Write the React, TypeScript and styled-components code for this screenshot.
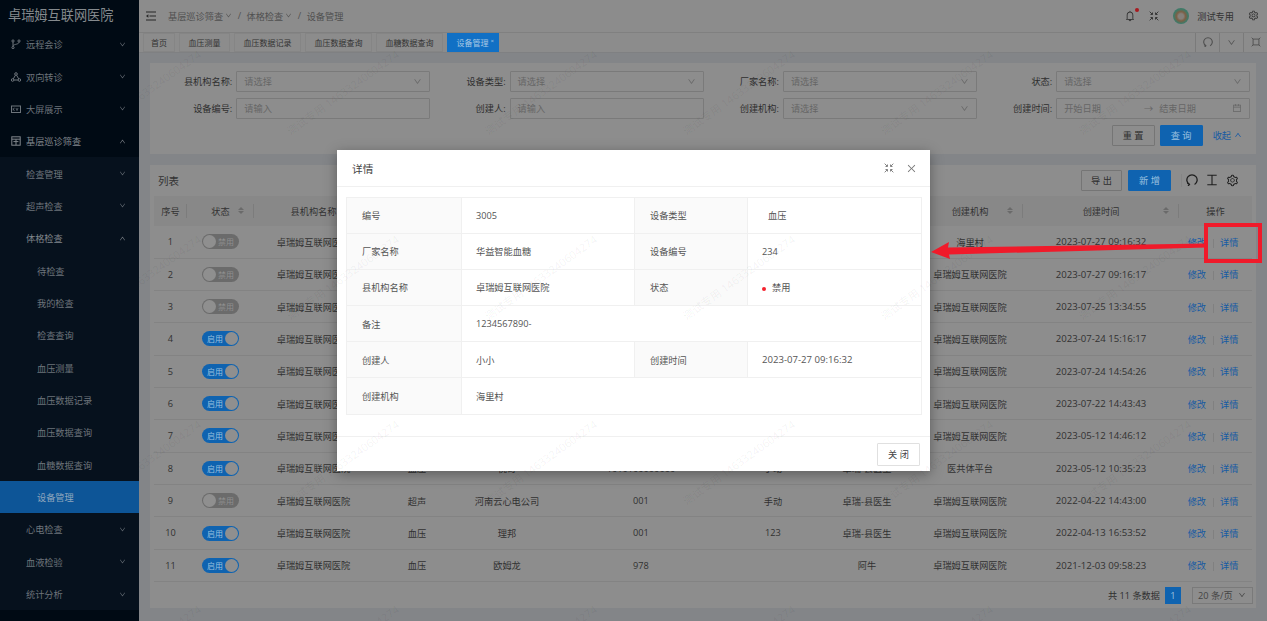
import React from 'react';
import styled, { createGlobalStyle } from 'styled-components';
import {
  AiOutlineBell,
  AiOutlineCalendar,
  AiOutlineClose,
  AiOutlineDown,
  AiOutlineSetting,
  AiOutlineUp,
} from 'react-icons/ai';

const FONT = '"Open Sans", "Noto Sans CJK SC", sans-serif';

const GlobalStyle = createGlobalStyle`
  html, body { margin: 0; padding: 0; height: 100%; overflow: hidden; }
  body { font-family: ${FONT}; font-size: 9.2px; color: #333; background: #838588; }
  * { box-sizing: border-box; }
`;

const Page = styled.div`
  position: relative;
  display: flex;
  width: 1267px;
  height: 621px;
  overflow: hidden;
`;

/* sidebar */
const Sidebar = styled.aside`
  flex: 0 0 139px;
  background: #000a14;
  color: #6d747b;
`;

const Logo = styled.div`
  height: 28px;
  padding: 0 8px;
  font-size: 13.2px;
  line-height: 30px;
  color: #858a8e;
  white-space: nowrap;
`;

const MenuRow = styled.div<{ $level?: number; $active?: boolean; $open?: boolean }>`
  display: flex;
  align-items: center;
  height: 32.35px;
  padding-left: ${(p) => (p.$level === 2 ? 37 : p.$level === 1 ? 26 : 11)}px;
  padding-right: 13px;
  background: ${(p) => (p.$active ? '#0d5597' : 'transparent')};
  color: ${(p) => (p.$open ? '#80868c' : p.$active ? '#8fa6bd' : '#6d747b')};
`;

const MenuIcon = styled.svg`
  flex: none;
  width: 10px;
  height: 10px;
  margin-right: 5px;
  fill: none;
  stroke: currentColor;
  stroke-width: 1;
`;

const MenuLabel = styled.span`
  flex: 1;
`;

const SubMenu = styled.div`
  background: #06111d;
`;

/* main column */
const Main = styled.main`
  flex: 1;
  min-width: 0;
  display: flex;
  flex-direction: column;
`;

const TopBar = styled.header`
  display: flex;
  align-items: center;
  height: 32px;
  padding: 0 8px 0 7px;
  background: #8c8c8c;
  color: #555;
`;

const FoldIcon = styled.svg`
  flex: none;
  width: 10px;
  height: 10px;
  color: #262626;
`;

const Crumbs = styled.div`
  flex: 1;
  display: flex;
  align-items: center;
  gap: 5.5px;
  margin-left: 12px;
  color: #505050;
`;

const Crumb = styled.span`
  display: flex;
  align-items: center;
  gap: 2px;
`;

const CrumbChevron = styled(AiOutlineDown)`
  font-size: 7px;
`;

const UserTools = styled.div`
  display: flex;
  align-items: center;
  color: #2f2f2f;
`;

const BellWrap = styled.span`
  position: relative;
  display: flex;
  font-size: 12px;
  margin-right: 13px;
`;

const RedDot = styled.i`
  position: absolute;
  top: -2px;
  right: -3px;
  width: 4px;
  height: 4px;
  border-radius: 50%;
  background: #a81a20;
`;

const Avatar = styled.span`
  width: 16px;
  height: 16px;
  margin: 0 8px 0 14px;
  border-radius: 50%;
  background: radial-gradient(circle at 50% 52%, #85807a 0 22%, #7d5f45 40%, #3f7a68 62%);
`;

const UserName = styled.span`
  margin-right: 14px;
  color: #333;
`;

const TabBar = styled.nav`
  display: flex;
  align-items: center;
  gap: 4px;
  height: 21px;
  padding-left: 4px;
  background: #8c8c8c;
  border-top: 1px solid #808080;
  border-bottom: 1px solid #7f8082;
`;

const Tab = styled.span<{ $active?: boolean }>`
  display: flex;
  align-items: center;
  justify-content: center;
  height: 19px;
  padding: 0 8.5px;
  border: 1px solid ${(p) => (p.$active ? '#1170c5' : '#858585')};
  background: ${(p) => (p.$active ? '#1170c5' : '#8c8c8c')};
  color: ${(p) => (p.$active ? '#a9c8e4' : '#333')};
  font-size: 8px;
  &:first-child { padding: 0 7px; }
`;

const TabClose = styled.span`
  font-size: 6px;
  margin: -3px -4px 0 2px;
`;

const TabTools = styled.div`
  display: flex;
  margin-left: auto;
  height: 100%;
`;

const TabTool = styled.span`
  display: flex;
  align-items: center;
  justify-content: center;
  width: 24px;
  border-left: 1px solid #7a7a7a;
  color: #505050;
  font-size: 10px;
`;

const Content = styled.div`
  flex: 1;
  display: flex;
  flex-direction: column;
  gap: 11px;
  padding: 10px 11px 13px;
  background: #838588;
`;

const FilterCard = styled.section`
  height: 91px;
  padding: 8px 6px 0 7px;
  background: #8d8d8d;
`;

const FilterGrid = styled.div`
  display: grid;
  grid-template-columns: repeat(4, 273.3px);
  row-gap: 6px;
`;

const Field = styled.label`
  display: flex;
  align-items: center;
  justify-content: flex-end;
  gap: 4px;
  color: #2f2f2f;
`;

const Input = styled.span`
  display: flex;
  align-items: center;
  justify-content: space-between;
  width: 194px;
  height: 21px;
  padding: 0 7px;
  border: 1px solid #7a7a7a;
  border-radius: 1px;
  color: #666;
`;

const DateInput = styled(Input)`
  justify-content: flex-start;
`;

const DateArrow = styled.span`
  margin: 0 6px 0 43px;
`;

const DateIcon = styled(AiOutlineCalendar)`
  margin-left: auto;
`;

const FilterActions = styled.div`
  display: flex;
  align-items: center;
  justify-content: flex-end;
  gap: 5px;
  margin-top: 6px;
  padding-right: 1px;
`;

const Button = styled.span<{ $primary?: boolean; $w?: number }>`
  display: flex;
  align-items: center;
  justify-content: center;
  width: ${(p) => p.$w ?? 43}px;
  height: 21px;
  border: 1px solid ${(p) => (p.$primary ? '#0f63b0' : '#757575')};
  border-radius: 1px;
  background: ${(p) => (p.$primary ? '#0f63b0' : 'transparent')};
  color: ${(p) => (p.$primary ? '#9cc0df' : '#2f2f2f')};
  white-space: pre;
`;

const Collapse = styled.span`
  display: flex;
  align-items: center;
  gap: 3px;
  margin: 0 7px 0 5px;
  color: #175aa3;
`;

const TableCard = styled.section`
  flex: 1;
  display: flex;
  flex-direction: column;
  background: #8d8d8d;
  padding: 0 4px;
`;

const TableHead = styled.div`
  display: flex;
  align-items: center;
  height: 31px;
  padding: 0 13px 0 4px;
  font-size: 10.5px;
  color: #333;
`;

const TableTitle = styled.span`
  flex: 1;
`;

const TableTools = styled.div`
  display: flex;
  align-items: center;
  gap: 6px;
  font-size: 9.2px;
`;

const IconGroup = styled.div`
  display: flex;
  align-items: center;
  gap: 8px;
  margin-left: 4px;
  padding-left: 4px;
  border-left: 1px solid #858585;
  color: #1f1f1f;
`;

const ToolIcon = styled.svg`
  display: block;
  width: 12px;
  height: 12px;
  fill: none;
  stroke: currentColor;
`;

const DataTable = styled.table`
  width: 1098px;
  table-layout: fixed;
  border-collapse: collapse;
`;

const Th = styled.th`
  position: relative;
  height: 30px;
  padding: 0;
  background: #888888;
  font-weight: 400;
  color: #333;
  text-align: center;
  &:not(:last-child)::after {
    content: '';
    position: absolute;
    right: 0;
    top: 8px;
    bottom: 8px;
    width: 1px;
    background: #7c7c7c;
  }
`;

const SortMark = styled.span`
  position: absolute;
  right: 10px;
  top: 11px;
  display: flex;
  flex-direction: column;
  gap: 1px;
  &::before, &::after {
    content: '';
    width: 0;
    height: 0;
    border-left: 3px solid transparent;
    border-right: 3px solid transparent;
  }
  &::before { border-bottom: 3px solid #6a6a6a; }
  &::after { border-top: 3px solid #6a6a6a; }
`;

const Td = styled.td<{ $time?: boolean; $actions?: boolean }>`
  height: 32.35px;
  padding: 0 ${(p) => (p.$actions ? 5 : 0)}px 0 0;
  text-align: center;
  white-space: nowrap;
  overflow: hidden;
  border-bottom: 1px solid #838383;
  color: #313131;
  font-size: ${(p) => (p.$time ? 9.6 : 9.2)}px;
`;

const Switch = styled.span<{ $on: boolean }>`
  display: inline-flex;
  align-items: center;
  flex-direction: ${(p) => (p.$on ? 'row' : 'row-reverse')};
  justify-content: space-between;
  width: 37px;
  height: 15px;
  padding: 0 ${(p) => (p.$on ? 1 : 5)}px 0 ${(p) => (p.$on ? 5 : 1)}px;
  border-radius: 8px;
  background: ${(p) => (p.$on ? '#0f63b0' : '#6b6b6b')};
  color: ${(p) => (p.$on ? '#9cc0df' : '#8f8f8f')};
  font-size: 8px;
  vertical-align: middle;
`;

const Knob = styled.i`
  width: 13px;
  height: 13px;
  border-radius: 50%;
  background: #8f8f8f;
`;

const LinkText = styled.span`
  color: #175aa3;
`;

const LinkDivider = styled.i`
  display: inline-block;
  width: 1px;
  height: 9px;
  margin: 0 6.5px;
  background: #808080;
  vertical-align: middle;
`;

const Pager = styled.div`
  display: flex;
  align-items: center;
  justify-content: flex-end;
  gap: 5px;
  height: 26px;
  margin-right: -1px;
  color: #2f2f2f;
`;

const PageNo = styled.span`
  display: flex;
  align-items: center;
  justify-content: center;
  width: 16px;
  height: 17px;
  background: #0f63b0;
  color: #9cc0df;
`;

const PageSize = styled.span`
  display: flex;
  align-items: center;
  justify-content: space-between;
  width: 61px;
  height: 17px;
  margin-left: 6px;
  padding: 0 6px 0 5px;
  border: 1px solid #7a7a7a;
  color: #444;
`;

/* dialog */
const Dialog = styled.div`
  position: absolute;
  left: 337px;
  top: 150px;
  display: flex;
  flex-direction: column;
  width: 593px;
  height: 321px;
  background: #fff;
  box-shadow: 0 3px 12px rgba(0, 0, 0, 0.35);
  color: #595959;
`;

const DialogHead = styled.div`
  display: flex;
  align-items: center;
  gap: 12px;
  height: 37px;
  padding: 0 13px 0 15px;
  border-bottom: 1px solid #f0f0f0;
  font-size: 10.7px;
  color: #444;
`;

const DialogTitle = styled.span`
  flex: 1;
`;

const DialogTool = styled.span`
  display: flex;
  color: #777;
`;

const DialogBody = styled.div`
  flex: 1;
  padding: 9.5px 9px 0;
`;

const DescTable = styled.table`
  width: 575px;
  table-layout: fixed;
  border-collapse: collapse;
`;

const DescLabel = styled.td`
  height: 36.2px;
  padding: 0 0 0 15px;
  border: 1px solid #f0f0f0;
  background: #fafafa;
  color: #555;
`;

const DescValue = styled.td<{ $indent?: number; $time?: boolean }>`
  padding: 0 0 0 ${(p) => p.$indent ?? 14}px;
  border: 1px solid #f0f0f0;
  color: #555;
  font-size: ${(p) => (p.$time ? 9.6 : 9.2)}px;
`;

const StatusDot = styled.i`
  display: inline-block;
  width: 4px;
  height: 4px;
  margin-right: 6px;
  border-radius: 50%;
  background: #f5222d;
  vertical-align: middle;
`;

const DialogFoot = styled.div`
  display: flex;
  align-items: center;
  justify-content: flex-end;
  height: 35px;
  padding-right: 10px;
  border-top: 1px solid #f0f0f0;
`;

const CloseButton = styled.span`
  display: flex;
  align-items: center;
  justify-content: center;
  width: 43px;
  height: 23px;
  border: 1px solid #e0e0e0;
  border-radius: 1px;
  color: #444;
  white-space: pre;
`;

/* overlays */
const WatermarkLayer = styled.div`
  position: absolute;
  inset: 0 0 0 139px;
  overflow: hidden;
  pointer-events: none;
`;

const WatermarkGrid = styled.div`
  display: grid;
  grid-template-columns: repeat(7, 198px);
  grid-auto-rows: 185px;
  margin: -1px 0 0 -94px;
`;

const Watermark = styled.span`
  align-self: center;
  justify-self: center;
  font-size: 11px;
  color: rgba(0, 0, 0, 0.06);
  white-space: nowrap;
  transform: rotate(-36deg);
`;

const Annotation = styled.svg`
  position: absolute;
  left: 0;
  top: 0;
  pointer-events: none;
`;

const ShrinkIcon = ({ size = 10 }: { size?: number }) => (
  <svg width={size} height={size} viewBox="0 0 12 12" fill="none" stroke="currentColor" strokeWidth="1.1">
    <path d="M.8.8l3 3M4.2 1.8v2.4H1.8M11.2.8l-3 3M7.8 1.8v2.4h2.4M.8 11.2l3-3M4.2 10.2V7.8H1.8M11.2 11.2l-3-3M7.8 10.2V7.8h2.4" />
  </svg>
);

const FrameIcon = ({ size = 10 }: { size?: number }) => (
  <svg width={size} height={size} viewBox="0 0 12 12" fill="none" stroke="currentColor" strokeWidth="1.1">
    <rect x="2.5" y="2.5" width="7" height="7" />
    <path d="M2.5 2.5L.8.8M9.5 2.5L11.2.8M2.5 9.5L.8 11.2M9.5 9.5l1.7 1.7" />
  </svg>
);

const ReloadIcon = ({ size = 10 }: { size?: number }) => (
  <svg width={size} height={size} viewBox="0 0 14 14" fill="none" stroke="currentColor" strokeWidth="1.6">
    <path d="M4 12.2A6 6 0 1 1 10 12.2" />
    <path d="M1.6 10.4L4 12.2 2.4 14" />
  </svg>
);

const SIDE_GROUPS: [string, React.ReactNode][] = [
  [
    '远程会诊',
    <>
      <circle cx="2" cy="2" r="1.1" />
      <circle cx="2" cy="8.6" r="1.1" />
      <circle cx="8" cy="2" r="1.1" />
      <path d="M2 3.1v4.4M8 3.1c0 2.4-4.5 1.8-6 3.6" />
    </>,
  ],
  [
    '双向转诊',
    <>
      <circle cx="5" cy="2" r="1.3" />
      <circle cx="1.6" cy="8" r="1.3" />
      <circle cx="8.4" cy="8" r="1.3" />
      <path d="M4.4 3.2L2.3 6.9M5.6 3.2l2.1 3.7M3 8h4" />
    </>,
  ],
  [
    '大屏展示',
    <>
      <rect x=".5" y="2" width="9" height="6.5" />
      <path d="M2.2 4v2.6M2.2 5.3l1.5-1.3M2.2 5.3l1.5 1.3M5 4l1 2.6L7 4" strokeWidth=".7" />
    </>,
  ],
];

const EXAM_ITEMS = ['待检查', '我的检查', '检查查询', '血压测量', '血压数据记录', '血压数据查询', '血糖数据查询'];

const TABS = ['首页', '血压测量', '血压数据记录', '血压数据查询', '血糖数据查询'];

const COLUMNS: [string, number, boolean][] = [
  ['序号', 33, false],
  ['状态', 67, true],
  ['县机构名称', 119, true],
  ['设备类型', 88, true],
  ['厂家名称', 92, true],
  ['设备编号', 176, true],
  ['采集方式', 88, true],
  ['创建人', 100, true],
  ['创建机构', 106, true],
  ['创建时间', 156, true],
  ['操作', 73, false],
];

type Row = [boolean, string, string, string, string, string, string, string];

const HOSPITAL = '卓瑞姆互联网医院';

const ROWS: Row[] = [
  [false, '血压', '华益智能血糖', '234', '手动', '小小', '海里村', '2023-07-27 09:16:32'],
  [false, '血压', '华益智能血糖', '123', '手动', '小小', HOSPITAL, '2023-07-27 09:16:17'],
  [false, '血压', '理邦', '001', '手动', '小小', HOSPITAL, '2023-07-25 13:34:55'],
  [true, '血压', '理邦', '001', '手动', '阿牛', HOSPITAL, '2023-07-24 15:16:17'],
  [true, '血压', '理邦', '002', '手动', '阿牛', HOSPITAL, '2023-07-24 14:54:26'],
  [true, '血压', '欧姆龙', '003', '手动', '阿牛', HOSPITAL, '2023-07-22 14:43:43'],
  [true, '血压', '欧姆龙', '004', '手动', '阿牛', HOSPITAL, '2023-05-12 14:46:12'],
  [true, '血压', '悦奇', '1010100000000', '手动', '卓瑞-县医生', '医共体平台', '2023-05-12 10:35:23'],
  [false, '超声', '河南云心电公司', '001', '手动', '卓瑞-县医生', HOSPITAL, '2022-04-22 14:43:00'],
  [true, '血压', '理邦', '001', '123', '卓瑞-县医生', HOSPITAL, '2022-04-13 16:53:52'],
  [true, '血压', '欧姆龙', '978', '', '阿牛', HOSPITAL, '2021-12-03 09:58:23'],
];

const App: React.FC = () => (
  <Page>
    <GlobalStyle />
    <Sidebar>
      <Logo>卓瑞姆互联网医院</Logo>
      {SIDE_GROUPS.map(([name, icon]) => (
        <MenuRow key={name}>
          <MenuIcon viewBox="0 0 10 10">{icon}</MenuIcon>
          <MenuLabel>{name}</MenuLabel>
          <AiOutlineDown size={7} />
        </MenuRow>
      ))}
      <MenuRow $open>
        <MenuIcon viewBox="0 0 10 10">
          <rect x=".8" y=".8" width="8.4" height="8.4" />
          <path d="M.8 3.2h8.4M5 3.2v6M2.4 5.6h5" />
        </MenuIcon>
        <MenuLabel>基层巡诊筛查</MenuLabel>
        <AiOutlineUp size={7} />
      </MenuRow>
      <SubMenu>
        <MenuRow $level={1}>
          <MenuLabel>检查管理</MenuLabel>
          <AiOutlineDown size={7} />
        </MenuRow>
        <MenuRow $level={1}>
          <MenuLabel>超声检查</MenuLabel>
          <AiOutlineDown size={7} />
        </MenuRow>
        <MenuRow $level={1} $open>
          <MenuLabel>体格检查</MenuLabel>
          <AiOutlineUp size={7} />
        </MenuRow>
        {EXAM_ITEMS.map((name) => (
          <MenuRow key={name} $level={2}>
            <MenuLabel>{name}</MenuLabel>
          </MenuRow>
        ))}
        <MenuRow $level={2} $active>
          <MenuLabel>设备管理</MenuLabel>
        </MenuRow>
        {['心电检查', '血液检验', '统计分析'].map((name) => (
          <MenuRow key={name} $level={1}>
            <MenuLabel>{name}</MenuLabel>
            <AiOutlineDown size={7} />
          </MenuRow>
        ))}
      </SubMenu>
    </Sidebar>

    <Main>
      <TopBar>
        <FoldIcon viewBox="0 0 10 10" fill="none" stroke="currentColor" strokeWidth="1.1">
          <path d="M0 1h10M3.5 5h6.5M0 9h10" />
          <path d="M0 5l2.4-1.7v3.4z" fill="currentColor" stroke="none" />
        </FoldIcon>
        <Crumbs>
          <Crumb>基层巡诊筛查<CrumbChevron /></Crumb>
          <span>/</span>
          <Crumb>体格检查<CrumbChevron /></Crumb>
          <span>/</span>
          <Crumb>设备管理</Crumb>
        </Crumbs>
        <UserTools>
          <BellWrap>
            <AiOutlineBell />
            <RedDot />
          </BellWrap>
          <ShrinkIcon />
          <Avatar />
          <UserName>测试专用</UserName>
          <AiOutlineSetting size={11} />
        </UserTools>
      </TopBar>

      <TabBar>
        {TABS.map((name) => (
          <Tab key={name}>{name}</Tab>
        ))}
        <Tab $active>设备管理<TabClose>×</TabClose></Tab>
        <TabTools>
          <TabTool><ReloadIcon /></TabTool>
          <TabTool><AiOutlineDown size={9} /></TabTool>
          <TabTool><FrameIcon /></TabTool>
        </TabTools>
      </TabBar>

      <Content>
        <FilterCard>
          <FilterGrid>
            <Field>县机构名称:<Input>请选择<AiOutlineDown size={9} /></Input></Field>
            <Field>设备类型:<Input>请选择<AiOutlineDown size={9} /></Input></Field>
            <Field>厂家名称:<Input>请选择<AiOutlineDown size={9} /></Input></Field>
            <Field>状态:<Input>请选择<AiOutlineDown size={9} /></Input></Field>
            <Field>设备编号:<Input>请输入</Input></Field>
            <Field>创建人:<Input>请输入</Input></Field>
            <Field>创建机构:<Input>请选择<AiOutlineDown size={9} /></Input></Field>
            <Field>
              创建时间:
              <DateInput>
                开始日期<DateArrow>→</DateArrow>结束日期
                <DateIcon size={10} />
              </DateInput>
            </Field>
          </FilterGrid>
          <FilterActions>
            <Button>重 置</Button>
            <Button $primary>查 询</Button>
            <Collapse>收起<AiOutlineUp size={8} /></Collapse>
          </FilterActions>
        </FilterCard>

        <TableCard>
          <TableHead>
            <TableTitle>列表</TableTitle>
            <TableTools>
              <Button $w={41}>导 出</Button>
              <Button $primary>新 增</Button>
              <IconGroup>
                <ToolIcon viewBox="0 0 14 14" strokeWidth="1.5">
                  <path d="M4 12.2A6 6 0 1 1 10 12.2" />
                  <path d="M1.6 10.4L4 12.2 2.4 14" />
                </ToolIcon>
                <ToolIcon viewBox="0 0 14 14" strokeWidth="1.3">
                  <path d="M1.5 1.5h11M1.5 12.5h11M7 1.5v11" />
                </ToolIcon>
                <AiOutlineSetting size={13} />
              </IconGroup>
            </TableTools>
          </TableHead>
          <DataTable>
            <colgroup>
              {COLUMNS.map(([name, width]) => (
                <col key={name} width={width} />
              ))}
            </colgroup>
            <thead>
              <tr>
                {COLUMNS.map(([name, , sortable]) => (
                  <Th key={name}>
                    {name}
                    {sortable && <SortMark />}
                  </Th>
                ))}
              </tr>
            </thead>
            <tbody>
              {ROWS.map((row, i) => (
                <tr key={row[7]}>
                  <Td>{i + 1}</Td>
                  <Td>
                    <Switch $on={row[0]}>
                      {row[0] ? '启用' : '禁用'}
                      <Knob />
                    </Switch>
                  </Td>
                  <Td>{HOSPITAL}</Td>
                  {row.slice(1).map((cell, c) => (
                    <Td key={c} $time={c === 6}>{cell}</Td>
                  ))}
                  <Td $actions>
                    <LinkText>修改</LinkText>
                    <LinkDivider />
                    <LinkText>详情</LinkText>
                  </Td>
                </tr>
              ))}
            </tbody>
          </DataTable>
          <Pager>
            共 11 条数据
            <PageNo>1</PageNo>
            <PageSize>20 条/页<AiOutlineDown size={8} /></PageSize>
          </Pager>
        </TableCard>
      </Content>
    </Main>

    <Dialog>
      <DialogHead>
        <DialogTitle>详情</DialogTitle>
        <DialogTool><ShrinkIcon size={10} /></DialogTool>
        <DialogTool><AiOutlineClose size={11} /></DialogTool>
      </DialogHead>
      <DialogBody>
        <DescTable>
          <colgroup>
            <col width={115} />
            <col width={173} />
            <col width={113} />
            <col width={174} />
          </colgroup>
          <tbody>
            <tr>
              <DescLabel>编号</DescLabel>
              <DescValue>3005</DescValue>
              <DescLabel>设备类型</DescLabel>
              <DescValue $indent={20}>血压</DescValue>
            </tr>
            <tr>
              <DescLabel>厂家名称</DescLabel>
              <DescValue>华益智能血糖</DescValue>
              <DescLabel>设备编号</DescLabel>
              <DescValue>234</DescValue>
            </tr>
            <tr>
              <DescLabel>县机构名称</DescLabel>
              <DescValue>卓瑞姆互联网医院</DescValue>
              <DescLabel>状态</DescLabel>
              <DescValue><StatusDot />禁用</DescValue>
            </tr>
            <tr>
              <DescLabel>备注</DescLabel>
              <DescValue colSpan={3}>1234567890-</DescValue>
            </tr>
            <tr>
              <DescLabel>创建人</DescLabel>
              <DescValue>小小</DescValue>
              <DescLabel>创建时间</DescLabel>
              <DescValue $time>2023-07-27 09:16:32</DescValue>
            </tr>
            <tr>
              <DescLabel>创建机构</DescLabel>
              <DescValue colSpan={3}>海里村</DescValue>
            </tr>
          </tbody>
        </DescTable>
      </DialogBody>
      <DialogFoot>
        <CloseButton>关 闭</CloseButton>
      </DialogFoot>
    </Dialog>

    <WatermarkLayer>
      <WatermarkGrid>
        {Array.from({ length: 28 }, (_, i) => (
          <Watermark key={i}>测试专用 14633240604274</Watermark>
        ))}
      </WatermarkGrid>
    </WatermarkLayer>

    <Annotation width="1267" height="621" viewBox="0 0 1267 621">
      <rect x="1206" y="225" width="54" height="36" fill="none" stroke="#f01a2a" strokeWidth="4" />
      <path d="M1206 243.5L948 247.5L949 242L931 252L950 259L949 254.5L1206 247.5Z" fill="#f01a2a" />
    </Annotation>
  </Page>
);

export default App;
